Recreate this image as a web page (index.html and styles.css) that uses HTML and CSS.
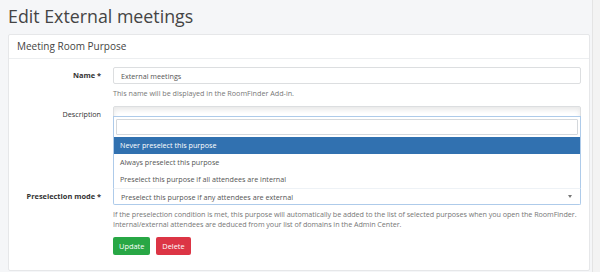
FILE: index.html
```html
<!DOCTYPE html>
<html lang="en">
<head>
    <meta charset="UTF-8">
    <meta name="viewport" content="width=device-width, initial-scale=1.0">
    <title>Edit External meetings</title>
    <link rel="stylesheet" href="styles.css">
</head>
<body>
    <div class="page">
        <main class="main">
            <h1 class="page-title">Edit External meetings</h1>
            <div class="card">
                <div class="card-header">Meeting Room Purpose</div>
                <form class="card-body">
                    <div class="form-row">
                        <label class="form-label bold" for="name">Name *</label>
                        <div class="form-field">
                            <input type="text" id="name" class="form-input" value="External meetings">
                            <div class="help-text">This name will be displayed in the RoomFinder Add-in.</div>
                        </div>
                    </div>
                    <div class="form-row row-desc">
                        <label class="form-label" for="description">Description</label>
                        <div class="form-field">
                            <textarea id="description" class="form-textarea"></textarea>
                        </div>
                    </div>
                    <div class="form-row">
                        <label class="form-label bold">Preselection mode *</label>
                        <div class="form-field">
                            <div class="select-wrap">
                                <div class="select-box open">
                                    <span class="select-value">Preselect this purpose if any attendees are external</span>
                                    <span class="select-arrow"></span>
                                </div>
                                <!-- open dropdown, rendered above the select -->
                                <div class="select-dropdown">
                                    <div class="select-search"><input type="text" class="search-input"></div>
                                    <ul class="select-options">
                                        <li class="option active">Never preselect this purpose</li>
                                        <li class="option">Always preselect this purpose</li>
                                        <li class="option">Preselect this purpose if all attendees are internal</li>
                                    </ul>
                                </div>
                            </div>
                            <div class="help-text multi">If the preselection condition is met, this purpose will automatically be added to the list of selected purposes when you open the RoomFinder.<br>Internal/external attendees are deduced from your list of domains in the Admin Center.</div>
                        </div>
                    </div>
                    <div class="form-row row-actions">
                        <span></span>
                        <div class="form-field actions">
                            <button type="button" class="btn btn-update">Update</button>
                            <button type="button" class="btn btn-delete">Delete</button>
                        </div>
                    </div>
                </form>
            </div>
        </main>
        <div class="scrollbar"></div>
    </div>
</body>
</html>
```

FILE: styles.css
```css
body {
    margin: 0;
    padding: 0;
    font-family: 'Open Sans', 'Noto Sans', sans-serif;
    background: #f5f6f8;
    color: #333;
}
.page {
    display: flex;
    height: 272px;
    overflow: hidden;
}
.main {
    flex: 1;
    padding: 0 2px 0 8px;
}
.scrollbar {
    width: 7px;
    background: #f3f3f3;
    border-left: 1px solid #e4e4e4;
}
.page-title {
    margin: 0;
    padding-top: 4px;
    height: 30px;
    font-size: 17.8px;
    font-weight: 400;
    line-height: 24px;
    color: #444;
}
.card {
    background: white;
    border: 1px solid #e6e7e9;
    border-radius: 2px;
}
.card-header {
    padding: 5px 8px 6px;
    font-size: 10px;
    line-height: 12px;
    color: #444;
    border-bottom: 1px solid #eceef0;
}
.card-body {
    padding: 8px 8px 15px;
    font-size: 7.2px;
}
.form-row {
    display: grid;
    grid-template-columns: 84px 1fr;
    column-gap: 12px;
    margin-bottom: 8px;
}
.row-desc {
    margin-bottom: 10px;
}
.row-actions {
    margin-bottom: 0;
}
.form-label {
    text-align: right;
    line-height: 17px;
    color: #333;
}
.form-label.bold {
    font-weight: bold;
    font-size: 7.4px;
}
.form-field {
    min-width: 0;
}
.form-input,
.form-textarea {
    display: block;
    width: 100%;
    box-sizing: border-box;
    margin: 0;
    font-family: inherit;
    font-size: 7.2px;
    color: #555;
    border: 1px solid #dcdee0;
    border-radius: 2px;
    background: white;
}
.form-input {
    height: 17px;
    padding: 0 7px;
}
.form-textarea {
    height: 72px;
    resize: none;
    box-shadow: inset 0 3px 5px rgba(0, 0, 0, 0.09);
}
.help-text {
    margin-top: 4px;
    line-height: 10px;
    color: #777;
}
.help-text.multi {
    white-space: nowrap;
    letter-spacing: -0.05px;
}
.select-wrap {
    position: relative;
}
.select-box {
    display: flex;
    align-items: center;
    height: 17px;
    box-sizing: border-box;
    padding: 0 7px;
    border: 1px solid #aecbea;
    border-top-color: #eef2f6;
    border-radius: 0 0 2px 2px;
    background: white;
    color: #555;
}
.select-value {
    flex: 1;
}
.select-arrow {
    width: 0;
    height: 0;
    border-left: 2px solid transparent;
    border-right: 2px solid transparent;
    border-top: 3px solid #777;
    margin-right: 1px;
}
.select-dropdown {
    position: absolute;
    left: 0;
    right: 0;
    bottom: 100%;
    background: white;
    border: 1px solid #aecbea;
    border-bottom: none;
}
.select-search {
    padding: 2px;
}
.search-input {
    display: block;
    width: 100%;
    height: 16px;
    box-sizing: border-box;
    margin: 0;
    border: 1px solid #d4d8dc;
    border-radius: 1px;
    background: white;
}
.select-options {
    list-style: none;
    margin: 0;
    padding: 0;
}
.option {
    height: 17px;
    line-height: 17px;
    padding: 0 6px;
    color: #555;
}
.option.active {
    background: #3171b0;
    color: white;
}
.actions {
    display: flex;
    gap: 6px;
}
.btn {
    height: 18px;
    padding: 0 6px;
    border: none;
    border-radius: 2px;
    font-family: inherit;
    font-size: 7.4px;
    color: white;
    cursor: pointer;
}
.btn-update {
    background: #28a745;
}
.btn-delete {
    background: #dc3545;
}
```
